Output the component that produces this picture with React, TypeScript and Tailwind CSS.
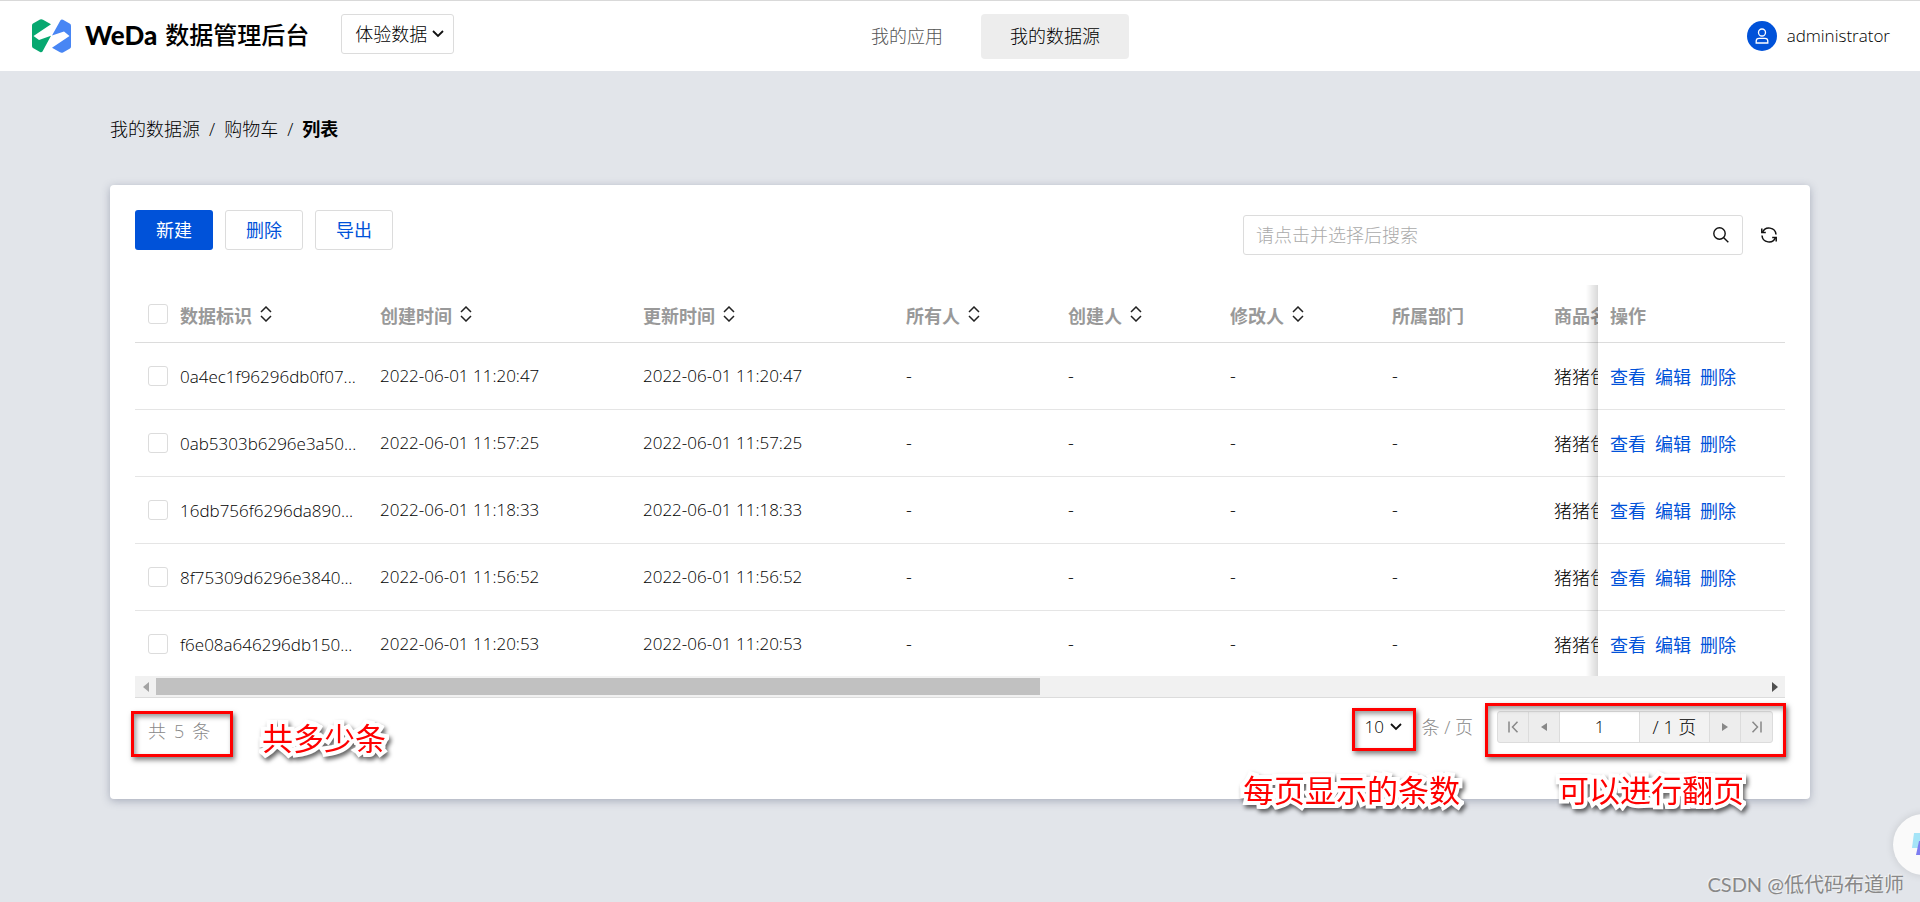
import { useState } from 'react';
import type { ReactNode } from 'react';

interface DataRow {
  id: string;
  createdAt: string;
  updatedAt: string;
}

interface Column {
  title: string;
  width: string;
  sortable: boolean;
}

const rows: DataRow[] = [
  { id: '0a4ec1f96296db0f07...', createdAt: '2022-06-01 11:20:47', updatedAt: '2022-06-01 11:20:47' },
  { id: '0ab5303b6296e3a50...', createdAt: '2022-06-01 11:57:25', updatedAt: '2022-06-01 11:57:25' },
  { id: '16db756f6296da890...', createdAt: '2022-06-01 11:18:33', updatedAt: '2022-06-01 11:18:33' },
  { id: '8f75309d6296e3840...', createdAt: '2022-06-01 11:56:52', updatedAt: '2022-06-01 11:56:52' },
  { id: 'f6e08a646296db150...', createdAt: '2022-06-01 11:20:53', updatedAt: '2022-06-01 11:20:53' },
];

const columns: Column[] = [
  { title: '数据标识', width: 'w-[200px]', sortable: true },
  { title: '创建时间', width: 'w-[263px]', sortable: true },
  { title: '更新时间', width: 'w-[263px]', sortable: true },
  { title: '所有人', width: 'w-[162px]', sortable: true },
  { title: '创建人', width: 'w-[162px]', sortable: true },
  { title: '修改人', width: 'w-[162px]', sortable: true },
  { title: '所属部门', width: 'w-[162px]', sortable: false },
  { title: '商品名', width: '', sortable: false },
];

function Logo() {
  return (
    <svg viewBox="0 0 39 34" className="w-[39px] h-[34px] shrink-0" aria-hidden="true">
      <path d="M8 0.600 Q9.500 -0.100 11 0.700 L19 5.300 L1.500 17 L7 21 L19 16.800 L10.500 32.500 Q9.500 33.800 8 33 L1 29 Q0 28.500 0 27 V6.500 Q0 5 1 4.500 Z" fill="#07a870" />
      <path d="M31 33.400 Q29.500 34.100 28 33.300 L20 28.700 L37.500 17 L32 12.500 L20 16.500 L28.500 1.200 Q29.500 0 31 0.800 L38 4.800 Q39 5.400 39 7 V27.500 Q39 28.900 38 29.500 Z" fill="#4886f4" />
    </svg>
  );
}

function Chevron() {
  return (
    <svg viewBox="0 0 12 8" className="w-3 h-2 pointer-events-none" fill="none" stroke="#111" strokeWidth="1.800" aria-hidden="true">
      <path d="M1 1 L6 6 L11 1" />
    </svg>
  );
}

function SortIcon() {
  return (
    <svg viewBox="0 0 12 16" className="w-3 h-4" fill="none" stroke="#222" strokeWidth="1.500" aria-hidden="true">
      <path d="M1 6 L6 1 L11 6 M1 10 L6 15 L11 10" />
    </svg>
  );
}

function Checkbox({ label }: { label: string }) {
  return (
    <input
      type="checkbox"
      aria-label={label}
      className="block w-5 h-5 appearance-none rounded-[3px] border border-[#dcdcdc] bg-white checked:bg-[#0052d9]"
    />
  );
}

// Red frame drawn round the part that is being explained
function Frame({ className }: { className: string }) {
  return (
    <div className={`absolute pointer-events-none border-3 border-[#ff0000] shadow-[2px_3px_5px_rgba(0,0,0,0.5),inset_2px_3px_5px_rgba(0,0,0,0.4)] ${className}`}></div>
  );
}

function Note({ className, children }: { className: string; children: ReactNode }) {
  return (
    <p className={`absolute whitespace-nowrap text-[31px] leading-10 font-normal text-[#ff0000] [-webkit-text-stroke:8px_white] [paint-order:stroke_fill] [stroke-linejoin:round] drop-shadow-[2px_3px_2px_rgba(0,0,0,0.6)] ${className}`}>
      {children}
    </p>
  );
}

function Header() {
  return (
    <header className="flex items-center h-[71px] pl-8 pr-[30px] bg-white border-t border-[#d9d9d9]">
      <div className="flex flex-1 items-center">
        <Logo />
        <h1 className="ml-[14px] mb-[2px] flex items-center gap-2 whitespace-nowrap text-black">
          <span className="font-[Lato] text-[26px] font-black">WeDa</span>
          <span className="text-[24px] font-medium">数据管理后台</span>
        </h1>
        <div className="relative ml-8 mb-1">
          <select aria-label="环境" className="block h-10 w-[113px] appearance-none rounded-[3px] border border-[#dcdcdc] bg-white pl-[13px] text-[18px]">
            <option>体验数据</option>
          </select>
          <span className="absolute right-[10px] top-4 pointer-events-none"><Chevron /></span>
        </div>
      </div>
      <nav className="ml-12 flex gap-2">
        <a href="#apps" className="px-[30px] h-[45px] leading-[45px] text-[#555]">我的应用</a>
        <a href="#sources" className="px-[29px] h-[45px] leading-[45px] rounded bg-[#ededed] text-black">我的数据源</a>
      </nav>
      <div className="flex flex-1 items-center justify-end gap-[10px]">
        <span className="flex h-[30px] w-[30px] items-center justify-center rounded-full bg-[#0052d9]">
          <svg viewBox="0 0 14 16" className="w-[14px] h-4" fill="none" stroke="white" strokeWidth="1.300" aria-hidden="true">
            <circle cx="7" cy="4.500" r="3.500" />
            <path d="M1.200 15 V13 Q1.200 10.300 4 10.300 H10 Q12.800 10.300 12.800 13 V15 Z" />
          </svg>
        </span>
        <span className="text-[17px]">administrator</span>
      </div>
    </header>
  );
}

function DataTable() {
  return (
    <div>
      <div className="overflow-hidden">
        <table className="w-[2995px] table-fixed border-separate border-spacing-0 text-left">
          <thead>
            <tr className="h-[58px] text-[#999]">
              <th className="w-[33px] border-b border-[#dcdcdc] pl-[13px]"><Checkbox label="全选" /></th>
              {columns.map((column) => (
                <th key={column.title} className={`border-b border-[#dcdcdc] px-3 font-bold ${column.width}`}>
                  <div className="flex items-center gap-2 pt-1">
                    {column.title}
                    {column.sortable && (
                      <button aria-label={`${column.title}排序`} className="pb-1"><SortIcon /></button>
                    )}
                  </div>
                </th>
              ))}
              <th className="sticky right-0 w-[187px] border-b border-[#dcdcdc] bg-white px-3 pt-1 font-bold before:absolute before:-left-3 before:top-0 before:-bottom-px before:w-3 before:bg-linear-to-l before:from-black/15 before:to-transparent">
                操作
              </th>
            </tr>
          </thead>
          <tbody>
            {rows.map((row) => (
              <tr key={row.id} className="group h-[67px] last:h-[65px]">
                <td className="border-b border-[#e5e5e5] pl-[13px] group-last:border-0"><Checkbox label={row.id} /></td>
                <td className="border-b border-[#e5e5e5] px-3 pt-[2px] text-[17px] whitespace-nowrap group-last:border-0">{row.id}</td>
                <td className="border-b border-[#e5e5e5] px-3 text-[17px] group-last:border-0">{row.createdAt}</td>
                <td className="border-b border-[#e5e5e5] px-3 text-[17px] group-last:border-0">{row.updatedAt}</td>
                <td className="border-b border-[#e5e5e5] px-3 group-last:border-0">-</td>
                <td className="border-b border-[#e5e5e5] px-3 group-last:border-0">-</td>
                <td className="border-b border-[#e5e5e5] px-3 group-last:border-0">-</td>
                <td className="border-b border-[#e5e5e5] px-3 group-last:border-0">-</td>
                <td className="border-b border-[#e5e5e5] px-3 pt-[2px] group-last:border-0">猪猪包</td>
                <td className="sticky right-0 border-b border-[#e5e5e5] bg-white px-3 pt-[2px] group-last:border-0 before:absolute before:-left-3 before:top-0 before:-bottom-px before:w-3 before:bg-linear-to-l before:from-black/15 before:to-transparent">
                  <div className="flex gap-[9px] font-normal text-[#0052d9]">
                    <a href="#view">查看</a>
                    <a href="#edit">编辑</a>
                    <a href="#delete">删除</a>
                  </div>
                </td>
              </tr>
            ))}
          </tbody>
        </table>
      </div>
      {/* Horizontal scroll bar */}
      <div className="flex h-[22px] items-center border-b border-[#dcdcdc] bg-[#f1f1f1]">
        <span className="flex w-[21px] justify-center">
          <svg viewBox="0 0 6 10" className="w-[6px] h-[10px]" fill="#a3a3a3" aria-hidden="true"><path d="M6 0 V10 L0 5 Z" /></svg>
        </span>
        <div className="flex-1"><div className="h-[17px] w-[55%] bg-[#c1c1c1]"></div></div>
        <span className="flex w-[21px] justify-center">
          <svg viewBox="0 0 6 10" className="w-[6px] h-[10px]" fill="#505050" aria-hidden="true"><path d="M0 0 V10 L6 5 Z" /></svg>
        </span>
      </div>
    </div>
  );
}

function Pagination() {
  const [page, setPage] = useState('1');

  return (
    <div className="flex justify-between pt-[13px] pr-3 pl-[13px]">
      <div className="relative mt-[6px] flex h-7 items-center gap-2 text-[#888]">
        <span>共</span>
        <span>5</span>
        <span>条</span>
        <Frame className="-left-[17px] -top-[6px] h-[46px] w-[102px]" />
        <Note className="left-[114px] top-[1px]">共多少条</Note>
      </div>
      <div className="flex h-8 items-center">
        <div className="relative">
          <select aria-label="每页条数" className="block h-8 w-[49px] appearance-none bg-white text-[17px]">
            <option>10</option>
          </select>
          <span className="absolute right-3 top-3 pointer-events-none"><Chevron /></span>
          <Frame className="-left-[13px] -top-[3px] h-[43px] w-[64px]" />
        </div>
        <span className="ml-2 text-[#888]">条 / 页</span>
        <div className="relative ml-6 flex h-8 rounded-[3px] border border-[#dcdcdc] bg-[#ededed]">
          <button aria-label="首页" className="flex w-[31px] items-center justify-center border-r border-[#dcdcdc]">
            <svg viewBox="0 0 11 12" className="w-[11px] h-3" fill="none" stroke="#888" strokeWidth="1.500" aria-hidden="true"><path d="M1 0.500 V11.500 M9.500 0.700 L4.500 6 L9.500 11.300" /></svg>
          </button>
          <button aria-label="上一页" className="flex w-[31px] items-center justify-center border-r border-[#dcdcdc]">
            <svg viewBox="0 0 6 8" className="w-[6px] h-2" fill="#888" aria-hidden="true"><path d="M6 0 V8 L0 4 Z" /></svg>
          </button>
          <input aria-label="页码" value={page} onChange={(e) => setPage(e.target.value)} className="w-[79px] bg-white text-center text-[17px]" />
          <span className="flex w-[71px] items-center justify-center whitespace-nowrap border-x border-[#dcdcdc] bg-[#f2f2f2]">/ 1 页</span>
          <button aria-label="下一页" className="flex w-[31px] items-center justify-center border-r border-[#dcdcdc]">
            <svg viewBox="0 0 6 8" className="w-[6px] h-2" fill="#888" aria-hidden="true"><path d="M0 0 V8 L6 4 Z" /></svg>
          </button>
          <button aria-label="末页" className="flex w-[31px] items-center justify-center">
            <svg viewBox="0 0 11 12" className="w-[11px] h-3" fill="none" stroke="#888" strokeWidth="1.500" aria-hidden="true"><path d="M10 0.500 V11.500 M1.500 0.700 L6.500 6 L1.500 11.300" /></svg>
          </button>
          <Frame className="-left-[13px] -top-[9px] h-[54px] w-[301px]" />
          <Note className="right-7 top-[58px]">可以进行翻页</Note>
          <Note className="right-[312px] top-[58px]">每页显示的条数</Note>
        </div>
      </div>
    </div>
  );
}

export default function App() {
  return (
    <div className="relative min-h-screen overflow-hidden bg-[#e2e5ea] font-['Open_Sans','Noto_Sans_CJK_SC',sans-serif] text-[18px] leading-7 font-light text-black">
      <Header />

      <main className="mx-[110px]">
        <div className="mt-11 flex gap-[9px]">
          <a href="#sources">我的数据源</a>
          <span>/</span>
          <a href="#cart">购物车</a>
          <span>/</span>
          <span className="font-bold">列表</span>
        </div>

        <section className="mt-[42px] rounded bg-white px-[25px] pt-[25px] pb-[54px] shadow-[0_2px_8px_rgba(60,70,100,0.35)]">
          <div className="flex items-start justify-between">
            <div className="flex gap-3">
              <button className="h-10 w-[78px] rounded-[3px] bg-[#0052d9] font-normal text-white">新建</button>
              <button className="h-10 w-[78px] rounded-[3px] border border-[#dcdcdc] font-normal text-[#0052d9]">删除</button>
              <button className="h-10 w-[78px] rounded-[3px] border border-[#dcdcdc] font-normal text-[#0052d9]">导出</button>
            </div>
            <div className="mt-[5px] mb-[30px] flex items-center gap-[18px] pr-2">
              <div className="flex h-10 w-[500px] items-center rounded-[3px] border border-[#dcdcdc] pr-[13px] pl-3">
                <input aria-label="搜索" placeholder="请点击并选择后搜索" className="min-w-0 flex-1 outline-none placeholder:text-[#aaa]" />
                <svg viewBox="0 0 16 16" className="w-4 h-4" fill="none" stroke="#111" strokeWidth="1.400" aria-hidden="true">
                  <circle cx="6.500" cy="6.500" r="5.700" />
                  <path d="M10.500 10.500 L15.300 15.300" />
                </svg>
              </div>
              <button aria-label="刷新">
                <svg viewBox="0 0 16 16" className="w-4 h-4" fill="none" stroke="#111" strokeWidth="1.500" aria-hidden="true">
                  <path d="M1.500 5.500 A7 7 0 0 1 15 7.500 M14.500 10.500 A7 7 0 0 1 1 8.500" />
                  <path d="M0.800 1.500 V5.500 H4.800 M15.200 14.500 V10.500 H11.200" />
                </svg>
              </button>
            </div>
          </div>
          <DataTable />
          <Pagination />
        </section>
      </main>

      {/* Floating helper button, half hidden at the edge of the window */}
      <button aria-label="助手" className="absolute -right-[34px] bottom-[27px] h-[61px] w-[61px] rounded-full bg-[#fafafa] shadow-[0_0_8px_rgba(0,0,0,0.12)]">
        <svg viewBox="0 0 24 24" className="absolute left-[18px] top-[18px] w-6 h-6" aria-hidden="true">
          <path d="M3 1 H16 L13 16 H1 Z" fill="#a5e4f7" />
          <path d="M8 9 H22 L19 23 H5 Z" fill="#7d7df0" />
        </svg>
      </button>
      <p className="absolute right-4 bottom-1 font-['Lato','Noto_Sans_CJK_SC',sans-serif] text-[20px] font-normal text-[#888] [text-shadow:-1px_-1px_0_#f5f5f5]">CSDN @低代码布道师</p>
    </div>
  );
}
